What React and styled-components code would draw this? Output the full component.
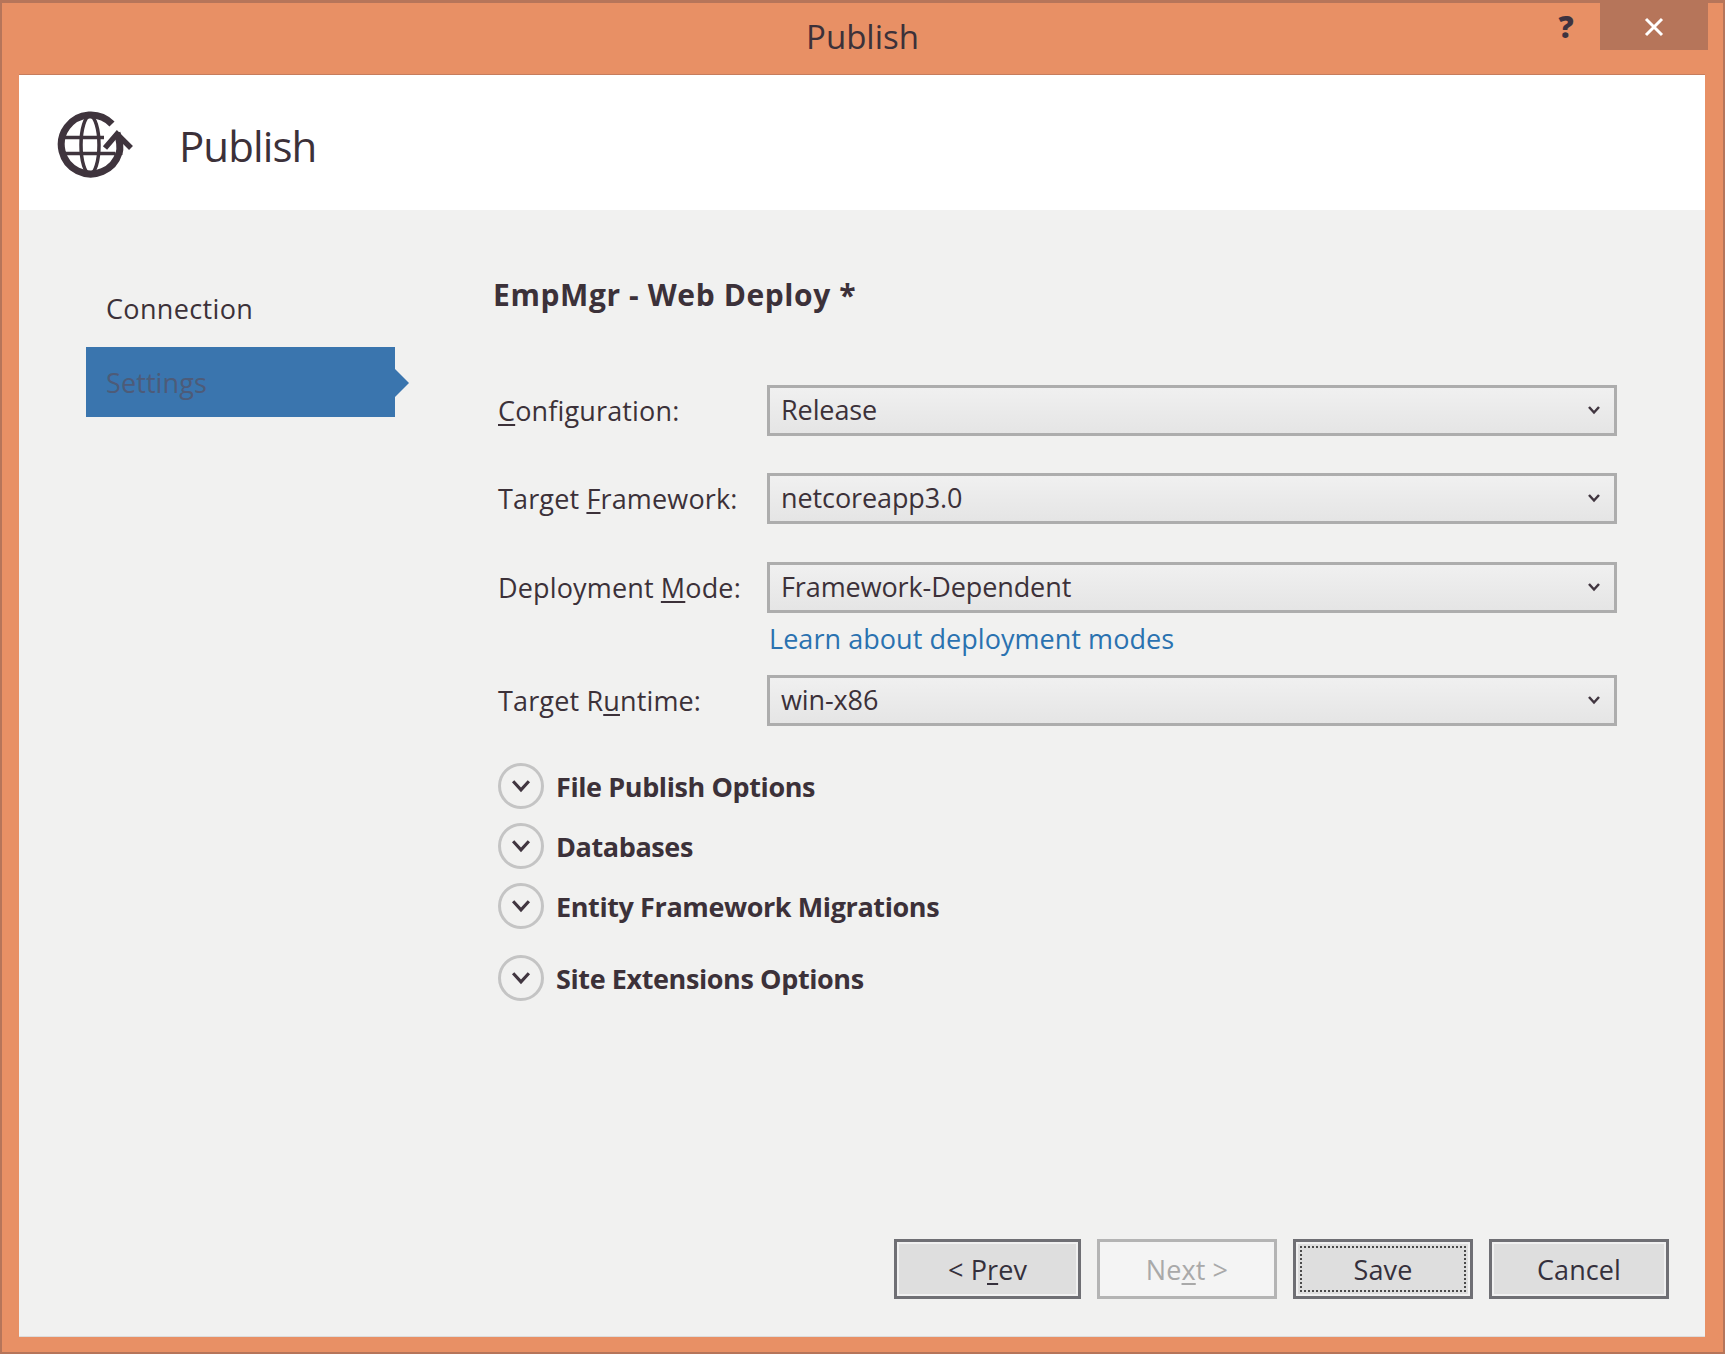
import React from 'react'
import styled, { createGlobalStyle } from 'styled-components'

const GlobalStyle = createGlobalStyle`
  html, body {
    margin: 0;
    padding: 0;
    background: #e89065;
  }
  body {
    font-family: 'Open Sans', 'Noto Sans', sans-serif;
    color: #3c3139;
  }
  u {
    text-underline-offset: 3px;
    text-decoration-thickness: 2px;
  }
`

const Win = styled.div`
  box-sizing: border-box;
  width: 1725px;
  height: 1354px;
  display: flex;
  flex-direction: column;
  background: #e89065;
  border: 3px solid #b6755a;
  border-width: 3px 2px 2px 2px;
`

const TitleBar = styled.div`
  height: 71px;
  flex: none;
  display: grid;
  grid-template-columns: 1fr auto 1fr;
`

const WinTitle = styled.div`
  grid-column: 2;
  font-size: 33px;
  line-height: 68px;
`

const WinActions = styled.div`
  grid-column: 3;
  display: flex;
  justify-content: flex-end;
  align-items: flex-start;
`

const HelpMark = styled.div`
  width: 46px;
  margin-right: 11px;
  text-align: center;
  font-size: 30px;
  font-weight: 800;
  line-height: 48px;
  color: #3d3340;
`

const CloseBtn = styled.div`
  width: 108px;
  height: 47px;
  margin-right: 15px;
  background: #b6755a;
  display: flex;
  align-items: center;
  justify-content: center;
`

const Client = styled.div`
  flex: 1;
  margin: 0 18px 15px 17px;
  display: flex;
  flex-direction: column;
  background: #f1f1f0;
  border-top: 1px solid #c67d5d;
  border-bottom: 1px solid #dcdcdc;
`

const Header = styled.header`
  height: 135px;
  box-sizing: border-box;
  padding: 6px 0 0 38px;
  flex: none;
  display: flex;
  align-items: center;
  background: #fff;
`

const HeaderTitle = styled.h1`
  margin: 0 0 0 44px;
  font-size: 42px;
  font-weight: 400;
  letter-spacing: -0.9px;
`

const Body = styled.div`
  flex: 1;
  display: grid;
  grid-template-columns: 475px 1fr;
`

const Side = styled.nav`
  padding: 67px 0 0 67px;
`

const SideItem = styled.div`
  position: relative;
  width: 309px;
  height: 70px;
  box-sizing: border-box;
  padding: ${props => props.active ? '0 0 0 20px' : '0 0 8px 20px'};
  display: flex;
  align-items: center;
  font-size: 27px;
  letter-spacing: ${props => props.active ? '0.1px' : '0.35px'};
  background: ${props => props.active ? '#3a75ae' : 'transparent'};
  color: ${props => props.active ? '#4d5b78' : '#3c3139'};
  ${props => props.active ? `
    &::after {
      content: '';
      position: absolute;
      left: 100%;
      top: 22px;
      border-left: 14px solid #3a75ae;
      border-top: 14px solid transparent;
      border-bottom: 14px solid transparent;
    }
  ` : ''}
`

const Main = styled.main`
  padding: 62px 88px 0 0;
`

const Heading = styled.h2`
  margin: 0 0 67px -1px;
  font-size: 30px;
  line-height: 46px;
  font-weight: 700;
  letter-spacing: 0.6px;
`

const Field = styled.div`
  display: grid;
  grid-template-columns: 269px 850px;
  align-items: center;
  padding-left: 4px;
  margin-bottom: ${props => props.gap}px;
`

const Label = styled.label`
  font-size: 27px;
  letter-spacing: 0.15px;
`

const Select = styled.div`
  box-sizing: border-box;
  height: 51px;
  padding: 0 13px 2px 11px;
  display: flex;
  align-items: center;
  justify-content: space-between;
  border: 3px solid #adadad;
  background: linear-gradient(#f0f0f0, #e5e5e5);
  font-size: 27px;
  letter-spacing: -0.1px;
`

const LearnLink = styled.a`
  display: block;
  margin: -28px 0 11px 273px;
  padding-left: 2px;
  height: 51px;
  line-height: 52px;
  font-size: 27px;
  letter-spacing: 0.05px;
  color: #2a72b0;
`

const Expanders = styled.div`
  margin-top: 37px;
  padding-left: 4px;
`

const Expander = styled.div`
  display: flex;
  align-items: center;
  gap: 12px;
  height: 46px;
  margin-bottom: ${props => props.gap}px;
  font-size: 27px;
  font-weight: 700;
  letter-spacing: -0.4px;
`

const Round = styled.span`
  box-sizing: border-box;
  width: 46px;
  height: 46px;
  flex: none;
  border: 3px solid #c4c4c4;
  border-radius: 50%;
  display: flex;
  align-items: center;
  justify-content: center;
`

const Footer = styled.footer`
  display: flex;
  justify-content: flex-end;
  gap: 16px;
  padding: 0 36px 37px 0;
`

const Btn = styled.button`
  box-sizing: border-box;
  width: ${props => props.wide ? 187 : 180}px;
  height: 60px;
  padding: 0;
  font-family: inherit;
  font-size: 27px;
  letter-spacing: 0.1px;
  color: ${props => props.disabled ? '#a9a9a9' : '#35303c'};
  border: 3px solid ${props => props.disabled ? '#b4b4b4' : '#6f6f74'};
  background: ${props => props.disabled ? '#f4f4f4' : '#dedede'};
  outline: ${props => props.focused ? '2px dotted #4a4a4a' : 'none'};
  outline-offset: -9px;
  box-shadow: ${props => props.disabled ? 'none' : 'inset 0 0 0 2px #f0f0f0'};
`

const Globe = () => (
  <svg width="78" height="70" viewBox="0 0 78 70" fill="none" stroke="#3f343d">
    <path d="M55 13 A29.5 29.5 0 1 0 62 42" strokeWidth="7" />
    <ellipse cx="33" cy="34" rx="9" ry="29" strokeWidth="3.5" />
    <path d="M5 26.5 H47 M5 42.5 H58" strokeWidth="3.5" />
    <path d="M48 37 L60 23 L74 37" strokeWidth="5.5" />
    <path d="M60 22 C63 30 64 36 62 43" strokeWidth="7" />
  </svg>
)

const Chevron = ({ size = 14, weight = 2.5, color = '#413640' }) => (
  <svg width={size} height={size} viewBox="0 0 14 14" fill="none" stroke={color} strokeWidth={weight}>
    <path d="M2 4 L7 9.5 L12 4" />
  </svg>
)

const fields = [
  { label: <><u>C</u>onfiguration:</>, value: 'Release', gap: 37 },
  { label: <>Target <u>F</u>ramework:</>, value: 'netcoreapp3.0', gap: 38 },
  { label: <>Deployment <u>M</u>ode:</>, value: 'Framework-Dependent', gap: 28 },
]

const sections = [
  { name: 'File Publish Options', gap: 14 },
  { name: 'Databases', gap: 14 },
  { name: 'Entity Framework Migrations', gap: 26 },
  { name: 'Site Extensions Options', gap: 0 },
]

const App = () => {
  return (
    <>
      <GlobalStyle />
      <Win>
        <TitleBar>
          <WinTitle>Publish</WinTitle>
          <WinActions>
            <HelpMark>?</HelpMark>
            <CloseBtn>
              <svg width="20" height="20" viewBox="0 0 20 20" stroke="#fff" strokeWidth="3">
                <path d="M2 2 L18 18 M18 2 L2 18" />
              </svg>
            </CloseBtn>
          </WinActions>
        </TitleBar>
        <Client>
          <Header>
            <Globe />
            <HeaderTitle>Publish</HeaderTitle>
          </Header>
          <Body>
            <Side>
              <SideItem>Connection</SideItem>
              <SideItem active>Settings</SideItem>
            </Side>
            <Main>
              <Heading>EmpMgr - Web Deploy *</Heading>
              {fields.map(f => (
                <Field key={f.value} gap={f.gap}>
                  <Label>{f.label}</Label>
                  <Select>{f.value}<Chevron /></Select>
                </Field>
              ))}
              <LearnLink>Learn about deployment modes</LearnLink>
              <Field gap={0}>
                <Label>Target R<u>u</u>ntime:</Label>
                <Select>win-x86<Chevron /></Select>
              </Field>
              <Expanders>
                {sections.map(s => (
                  <Expander key={s.name} gap={s.gap}>
                    <Round><Chevron size={22} weight={2} /></Round>
                    {s.name}
                  </Expander>
                ))}
              </Expanders>
            </Main>
          </Body>
          <Footer>
            <Btn wide>&lt; P<u>r</u>ev</Btn>
            <Btn disabled>Ne<u>x</u>t &gt;</Btn>
            <Btn focused>Save</Btn>
            <Btn>Cancel</Btn>
          </Footer>
        </Client>
      </Win>
    </>
  )
}

export default App
